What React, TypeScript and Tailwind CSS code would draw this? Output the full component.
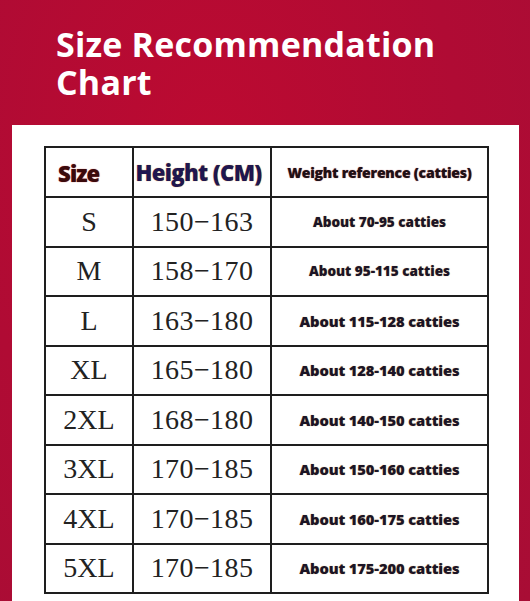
import React from 'react';

const rows = [
  { size: 'S', height: '150−163', weight: 'About 70-95 catties', big: false },
  { size: 'M', height: '158−170', weight: 'About 95-115 catties', big: false },
  { size: 'L', height: '163−180', weight: 'About 115-128 catties', big: true },
  { size: 'XL', height: '165−180', weight: 'About 128-140 catties', big: true },
  { size: '2XL', height: '168−180', weight: 'About 140-150 catties', big: true },
  { size: '3XL', height: '170−185', weight: 'About 150-160 catties', big: true },
  { size: '4XL', height: '170−185', weight: 'About 160-175 catties', big: true },
  { size: '5XL', height: '170−185', weight: 'About 175-200 catties', big: true },
];

export default function App() {
  return (
    <div className="w-[530px] h-[601px] overflow-hidden bg-[radial-gradient(ellipse_at_40%_25%,#bc0a31_0%,#b00b34_55%,#a80d35_100%)] font-['Open_Sans',sans-serif]">
      {/* Title */}
      <h1 className="pt-[25px] pl-[56px] text-[34px] leading-[38px] font-bold text-white tracking-[0.2px]">
        Size Recommendation
        <br />
        Chart
      </h1>

      {/* Card */}
      <div className="mt-[24px] ml-[12px] w-[507px] h-[500px] bg-white pt-[21px] pl-[32px]">
        <table className="border-collapse border-2 border-[#1e1e1e] w-[443px] table-fixed">
          <colgroup>
            <col className="w-[88px]" />
            <col className="w-[138px]" />
            <col className="w-[217px]" />
          </colgroup>
          <thead>
            <tr className="h-[50px]">
              <th className="border-2 border-[#1e1e1e] p-0 text-left pl-[12px] pt-[3px] text-[22px] font-extrabold tracking-[-0.8px] text-[#3a0a0c] [text-shadow:0_0_1px_#c03030]">
                Size
              </th>
              <th className="border-2 border-[#1e1e1e] p-0 pr-[7px] text-center pt-[1px] text-[22px] font-extrabold tracking-[-0.6px] text-[#1e1650] [text-shadow:0_0_1px_#d08a30]">
                Height (CM)
              </th>
              <th className="border-2 border-[#1e1e1e] p-0 text-center text-[14px] font-extrabold tracking-[-0.2px] text-[#1e1016] [text-shadow:0_0_1px_#a0404a]">
                Weight reference (catties)
              </th>
            </tr>
          </thead>
          <tbody>
            {rows.map((r) => (
              <tr key={r.size} className="h-[49.5px]">
                <td className="border-2 border-[#1e1e1e] p-0 text-center font-['Liberation_Serif',serif] text-[28px] text-[#222] leading-none">
                  {r.size}
                </td>
                <td className="border-2 border-[#1e1e1e] p-0 text-center font-['Liberation_Serif',serif] text-[28px] tracking-[0.4px] text-[#222] leading-none">
                  {r.height}
                </td>
                <td
                  className={`border-2 border-[#1e1e1e] p-0 text-center font-extrabold text-[#1b1426] [text-shadow:0_0_1px_#c8a070] ${
                    r.big ? 'text-[14.7px] tracking-[-0.1px]' : 'text-[13.5px]'
                  }`}
                >
                  {r.weight}
                </td>
              </tr>
            ))}
          </tbody>
        </table>
      </div>
    </div>
  );
}
